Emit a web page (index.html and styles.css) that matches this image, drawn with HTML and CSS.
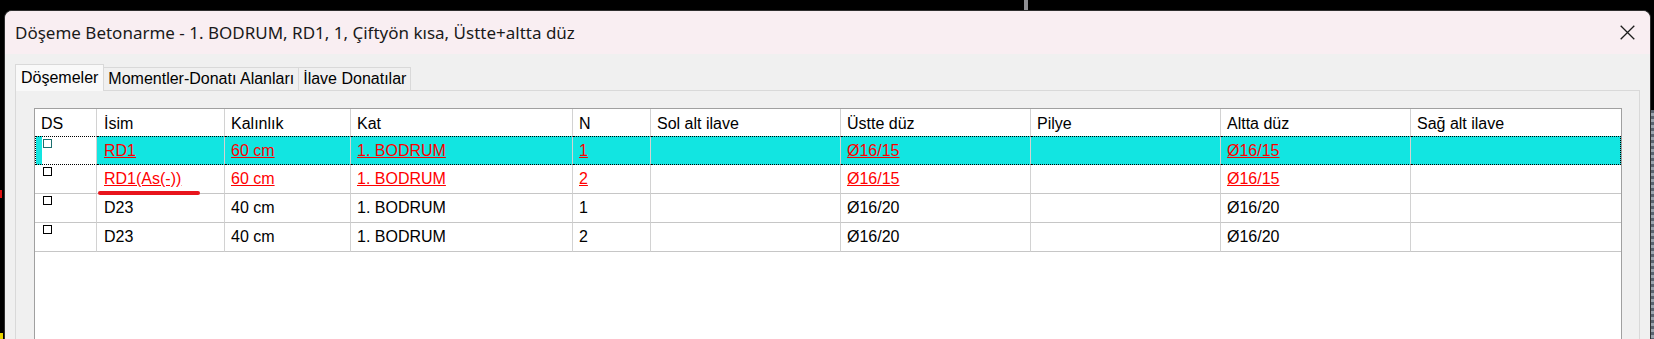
FILE: index.html
```html
<!DOCTYPE html>
<html lang="tr">

<head>
    <meta charset="UTF-8">
    <meta name="viewport" content="width=device-width, initial-scale=1.0">
    <title>Döşeme Betonarme</title>
    <link rel="stylesheet" href="styles.css">
</head>

<body>
    <div class="desktop">
        <!-- bits of the desktop showing around the dialog -->
        <span class="desk-bar"></span>
        <span class="desk-red"></span>
        <span class="desk-yellow"></span>
        <span class="desk-stripes"></span>

        <div class="window">
            <div class="titlebar">
                <span class="title">Döşeme Betonarme - 1. BODRUM, RD1, 1, Çiftyön kısa, Üstte+altta düz</span>
                <button class="close" aria-label="Kapat">
                    <svg width="15" height="15" viewBox="0 0 15 15">
                        <path d="M0.7 0.7 L14.3 14.3 M14.3 0.7 L0.7 14.3" stroke="#1c1c1c" stroke-width="1.3" fill="none" />
                    </svg>
                </button>
            </div>

            <div class="client">
                <div class="tabs">
                    <div class="tab active">Döşemeler</div>
                    <div class="tab">Momentler-Donatı Alanları</div>
                    <div class="tab">İlave Donatılar</div>
                </div>

                <div class="panel">
                    <div class="grid">
                        <table>
                            <colgroup>
                                <col style="width: 62px">
                                <col style="width: 128px">
                                <col style="width: 126px">
                                <col style="width: 222px">
                                <col style="width: 78px">
                                <col style="width: 190px">
                                <col style="width: 190px">
                                <col style="width: 190px">
                                <col style="width: 190px">
                                <col style="width: 210px">
                            </colgroup>
                            <thead>
                                <tr>
                                    <th>DS</th>
                                    <th class="name">İsim</th>
                                    <th>Kalınlık</th>
                                    <th>Kat</th>
                                    <th>N</th>
                                    <th>Sol alt ilave</th>
                                    <th>Üstte düz</th>
                                    <th>Pilye</th>
                                    <th>Altta düz</th>
                                    <th>Sağ alt ilave</th>
                                </tr>
                            </thead>
                            <tbody>
                                <tr class="selected warn">
                                    <td class="ds"><span class="check"></span></td>
                                    <td class="name"><span>RD1</span></td>
                                    <td><span>60 cm</span></td>
                                    <td><span>1. BODRUM</span></td>
                                    <td><span>1</span></td>
                                    <td></td>
                                    <td><span>Ø16/15</span></td>
                                    <td></td>
                                    <td><span>Ø16/15</span></td>
                                    <td></td>
                                </tr>
                                <tr class="warn">
                                    <td class="ds"><span class="check"></span></td>
                                    <td class="name"><span>RD1(As(-))</span><i class="scribble"></i></td>
                                    <td><span>60 cm</span></td>
                                    <td><span>1. BODRUM</span></td>
                                    <td><span>2</span></td>
                                    <td></td>
                                    <td><span>Ø16/15</span></td>
                                    <td></td>
                                    <td><span>Ø16/15</span></td>
                                    <td></td>
                                </tr>
                                <tr>
                                    <td class="ds"><span class="check"></span></td>
                                    <td class="name">D23</td>
                                    <td>40 cm</td>
                                    <td>1. BODRUM</td>
                                    <td>1</td>
                                    <td></td>
                                    <td>Ø16/20</td>
                                    <td></td>
                                    <td>Ø16/20</td>
                                    <td></td>
                                </tr>
                                <tr>
                                    <td class="ds"><span class="check"></span></td>
                                    <td class="name">D23</td>
                                    <td>40 cm</td>
                                    <td>1. BODRUM</td>
                                    <td>2</td>
                                    <td></td>
                                    <td>Ø16/20</td>
                                    <td></td>
                                    <td>Ø16/20</td>
                                    <td></td>
                                </tr>
                            </tbody>
                        </table>
                    </div>
                </div>
            </div>
        </div>
    </div>
</body>

</html>
```

FILE: styles.css
```css
* {
    box-sizing: border-box;
}

body {
    margin: 0;
    background-color: #000;
    font-family: "Liberation Sans", Arial, sans-serif;
}

.desktop {
    position: relative;
    width: 1654px;
    height: 339px;
    overflow: hidden;
    padding: 10px 0 0 4px;
}

.desk-bar {
    position: absolute;
    left: 1024px;
    top: 0;
    width: 4px;
    height: 10px;
    background-color: #8f8f93;
}

.desk-red {
    position: absolute;
    left: 0;
    top: 190px;
    width: 2px;
    height: 8px;
    background-color: #d11;
}

.desk-yellow {
    position: absolute;
    left: 0;
    top: 333px;
    width: 3px;
    height: 6px;
    background-color: #e8d400;
}

.desk-stripes {
    position: absolute;
    left: 1651px;
    top: 110px;
    width: 3px;
    height: 229px;
    background: repeating-linear-gradient(#5a6470 0 3px, #9aa3ad 3px 6px);
}

.window {
    width: 1647px;
    height: 329px;
    border: 1px solid #2f2f2f;
    border-bottom: none;
    border-radius: 8px 8px 0 0;
    background-color: #f0f0f0;
    display: flex;
    flex-direction: column;
    overflow: hidden;
}

.titlebar {
    flex: none;
    height: 43px;
    display: flex;
    align-items: center;
    justify-content: space-between;
    padding-left: 10px;
    background-color: #f9eef2;
}

.title {
    font-family: "Noto Sans", sans-serif;
    font-size: 17px;
    color: #1a1a1a;
}

.close {
    width: 46px;
    height: 43px;
    padding: 0;
    border: none;
    background: transparent;
    display: flex;
    align-items: center;
    justify-content: center;
}

.client {
    flex: 1;
    min-height: 0;
    display: flex;
    flex-direction: column;
    padding: 10px 10px 0 10px;
}

.tabs {
    flex: none;
    height: 26px;
    display: flex;
    align-items: flex-end;
    position: relative;
    z-index: 1;
}

.tab {
    height: 23px;
    padding: 0 4px;
    border: 1px solid #d9d9d9;
    border-bottom: none;
    border-left: none;
    background-color: #f0f0f0;
    font-size: 16px;
    line-height: 22px;
    color: #000;
    white-space: nowrap;
}

.tab.active {
    height: 27px;
    margin-bottom: -1px;
    padding: 2px 5px 0;
    border-left: 1px solid #d9d9d9;
    background-color: #f9f9f9;
}

.panel {
    flex: 1;
    min-height: 0;
    border: 1px solid #d9d9d9;
    border-bottom: none;
    padding: 17px 17px 0 18px;
    background-color: #f0f0f0;
}

.grid {
    height: 100%;
    border: 1px solid #a0a0a0;
    border-bottom: none;
    background-color: #fff;
}

.grid table {
    width: 1586px;
    table-layout: fixed;
    border-spacing: 0;
    font-size: 16px;
    color: #000;
}

.grid th,
.grid td {
    padding: 0 6px;
    text-align: left;
    font-weight: normal;
    white-space: nowrap;
    border-right: 1px solid #d2d2d2;
}

.grid th:last-child,
.grid td:last-child {
    border-right: none;
}

.grid th {
    height: 27px;
    padding-top: 3px;
    vertical-align: middle;
}

.grid td {
    height: 29px;
    vertical-align: middle;
    border-bottom: 1px solid #c6c6c6;
}

.grid .name {
    padding-left: 7px;
}

.grid td.ds {
    vertical-align: top;
    padding: 2px 0 0 8px;
}

.check {
    display: block;
    width: 9px;
    height: 9px;
    border: 1px solid #000;
    background-color: #fff;
}

.warn span {
    color: #ff0000;
    text-decoration: underline;
}

.selected td {
    background-color: #12e5e1;
    border-top: 1px dotted #000;
    border-bottom: 1px dotted #000;
}

.selected td:first-child {
    border-left: 1px dotted #000;
    padding-left: 7px;
    background: linear-gradient(to right, #12e5e1 6px, #fff 6px);
}

.selected td:last-child {
    border-right: 1px dotted #000;
}

.selected .check {
    border-color: #1d6f6f;
}

.grid td.name {
    position: relative;
}

.scribble {
    position: absolute;
    left: 1px;
    top: 26px;
    width: 102px;
    height: 4px;
    border-radius: 2px;
    background-color: #e8141c;
    z-index: 2;
}
```
